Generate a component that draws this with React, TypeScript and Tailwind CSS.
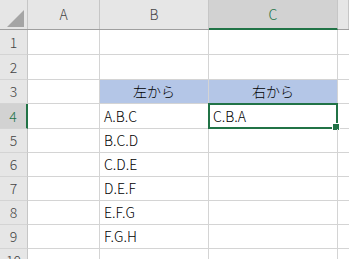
const cols = [
  { key: 'A', w: 'w-[72px]' },
  { key: 'B', w: 'w-[109px]' },
  { key: 'C', w: 'w-[129px]' },
  { key: '', w: 'flex-1' },
]

const rows: { n: number; h: string; b?: string; c?: string }[] = [
  { n: 1, h: 'h-[25px]' },
  { n: 2, h: 'h-[25px]' },
  { n: 3, h: 'h-[24px]', b: '左から', c: '右から' },
  { n: 4, h: 'h-[25px]', b: 'A.B.C', c: 'C.B.A' },
  { n: 5, h: 'h-[24px]', b: 'B.C.D' },
  { n: 6, h: 'h-[24px]', b: 'C.D.E' },
  { n: 7, h: 'h-[24px]', b: 'D.E.F' },
  { n: 8, h: 'h-[24px]', b: 'E.F.G' },
  { n: 9, h: 'h-[24px]', b: 'F.G.H' },
  { n: 10, h: 'h-[24px]' },
]

const font = "font-['Noto_Sans_CJK_JP','Noto_Sans',sans-serif]"

const App = () => (
  <div className={`w-[349px] h-[259px] overflow-hidden bg-white text-[14px] font-light text-black ${font}`}>
    <div className="flex h-[30px] bg-[#e6e6e6] border-b border-[#9f9f9f]">
      <div className="relative w-[28px] shrink-0 border-r border-[#c6c6c6]">
        <svg className="absolute left-[7px] top-[10px]" width="17" height="17" viewBox="0 0 17 17">
          <polygon points="17,0 17,17 0,17" fill="#a5a5a5" />
        </svg>
      </div>
      {cols.map((c) =>
        c.key === 'C' ? (
          <div
            key={c.key}
            className={`${c.w} shrink-0 flex items-center justify-center bg-[#d2d2d2] text-[#217346] border-r border-[#c6c6c6] border-b-2 border-b-[#217346] -mb-px`}
          >
            {c.key}
          </div>
        ) : (
          <div
            key={c.key}
            className={`${c.w} shrink-0 flex items-center justify-center text-[#444] border-r border-[#c6c6c6]`}
          >
            {c.key}
          </div>
        )
      )}
    </div>
    {rows.map((r) => (
      <div key={r.n} className={`flex ${r.h}`}>
        <div
          className={`w-[28px] shrink-0 flex items-center justify-center border-b border-[#d4d4d4] ${
            r.n === 4
              ? 'bg-[#d2d2d2] text-[#217346] border-r-2 border-r-[#217346]'
              : 'bg-[#e6e6e6] text-[#444] border-r border-r-[#c6c6c6]'
          }`}
        >
          {r.n}
        </div>
        <div className="w-[72px] shrink-0 border-r border-b border-[#d4d4d4]" />
        <div
          className={`w-[109px] shrink-0 flex items-center border-r border-b border-[#d4d4d4] ${
            r.n === 3 ? 'bg-[#b4c6e7] justify-center' : 'pl-[4px]'
          }`}
        >
          {r.b}
        </div>
        <div
          className={`relative w-[129px] shrink-0 flex items-center border-r border-b border-[#d4d4d4] ${
            r.n === 3 ? 'bg-[#b4c6e7] justify-center' : 'pl-[4px]'
          }`}
        >
          {r.c}
          {r.n === 4 && (
            <>
              <div className="absolute -left-px -top-px -right-px -bottom-px border-2 border-[#217346]" />
              <div className="absolute -right-[3px] -bottom-[3px] w-[8px] h-[8px] bg-[#217346] border border-white" />
            </>
          )}
        </div>
        <div className="flex-1 border-b border-[#d4d4d4]" />
      </div>
    ))}
  </div>
)

export default App
